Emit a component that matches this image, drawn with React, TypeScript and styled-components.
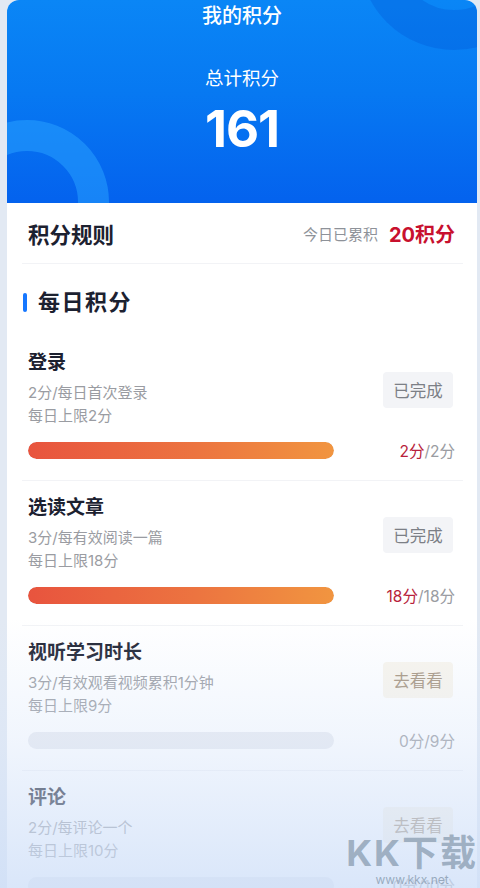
import React from "react";
import styled, { createGlobalStyle } from "styled-components";

interface Task {
  title: string;
  rule: string;
  limit: string;
  got: number;
  max: number;
  done: boolean;
}

const tasks: Task[] = [
  { title: "登录", rule: "2分/每日首次登录", limit: "每日上限2分", got: 2, max: 2, done: true },
  { title: "选读文章", rule: "3分/每有效阅读一篇", limit: "每日上限18分", got: 18, max: 18, done: true },
  { title: "视听学习时长", rule: "3分/有效观看视频累积1分钟", limit: "每日上限9分", got: 0, max: 9, done: false },
  { title: "评论", rule: "2分/每评论一个", limit: "每日上限10分", got: 0, max: 10, done: false },
];

const App = () => {
  return (
    <>
      <GlobalStyle />
      <Page>
        <Card>
          <Header>
            <TopRing />
            <BottomRing />
            <HeaderTitle>我的积分</HeaderTitle>
            <TotalLabel>总计积分</TotalLabel>
            <TotalValue>161</TotalValue>
          </Header>

          <Body>
            <RulesRow>
              <RulesTitle>积分规则</RulesTitle>
              <Today>
                <TodayLabel>今日已累积</TodayLabel>
                <TodayValue>20积分</TodayValue>
              </Today>
            </RulesRow>

            <SectionTitle>每日积分</SectionTitle>

            {tasks.map((t, i) => (
              <Item key={i}>
                <ItemTop>
                  <Info>
                    <ItemTitle>{t.title}</ItemTitle>
                    <SubLine>{t.rule}</SubLine>
                    <SubLine>{t.limit}</SubLine>
                  </Info>
                  <ActionButton $done={t.done}>{t.done ? "已完成" : "去看看"}</ActionButton>
                </ItemTop>
                <ProgressRow>
                  <Track>
                    <Fill style={{ width: `${(t.got / t.max) * 100}%` }} />
                  </Track>
                  <Score>
                    <Got $active={t.got > 0}>{t.got}分</Got>/{t.max}分
                  </Score>
                </ProgressRow>
              </Item>
            ))}
          </Body>
        </Card>
        <Fade />
        <Watermark>
          <WmBig>KK下载</WmBig>
          <WmSmall>www.kkx.net</WmSmall>
        </Watermark>
      </Page>
    </>
  );
};

export default App;

const GlobalStyle = createGlobalStyle`
  html, body {
    margin: 0;
    height: 888px;
    overflow: hidden;
    background: #e2e9f3;
    font-family: "Inter", "Noto Sans CJK SC", sans-serif;
  }
`;

const Page = styled.div`
  position: relative;
  height: 888px;
  overflow: hidden;
  padding: 0 3px 0 7px;
`;

const Card = styled.div`
  background: #fff;
  border-radius: 12px 12px 0 0;
  overflow: hidden;
  min-height: 888px;
`;

const Header = styled.div`
  position: relative;
  overflow: hidden;
  height: 203px;
  background: linear-gradient(180deg, #0a86f6 0%, #0779f2 45%, #0462ee 100%);
  display: flex;
  flex-direction: column;
  align-items: center;
  color: #fff;
`;

const TopRing = styled.div`
  position: absolute;
  left: 352px;
  top: -140px;
  width: 190px;
  height: 190px;
  border-radius: 50%;
  border: 40px solid rgba(0, 80, 210, 0.28);
  box-sizing: border-box;
`;

const BottomRing = styled.div`
  position: absolute;
  left: -62px;
  top: 120px;
  width: 164px;
  height: 164px;
  border-radius: 50%;
  border: 31px solid rgba(40, 160, 255, 0.55);
  box-sizing: border-box;
`;

const HeaderTitle = styled.div`
  position: relative;
  font-size: 20px;
  line-height: 26px;
  margin-top: 3px;
  font-weight: 500;
`;

const TotalLabel = styled.div`
  position: relative;
  font-size: 18.5px;
  line-height: 26px;
  margin-top: 36px;
`;

const TotalValue = styled.div`
  position: relative;
  font-size: 51px;
  line-height: 56px;
  margin-top: 10px;
  font-weight: 700;
  letter-spacing: -1px;
`;

const Body = styled.div`
  padding: 0 14px 0 15px;
`;

const RulesRow = styled.div`
  height: 60px;
  display: flex;
  align-items: center;
  justify-content: space-between;
  padding: 0 8px 0 6px;
  border-bottom: 1px solid #f2f3f6;
`;

const RulesTitle = styled.div`
  font-size: 21.5px;
  font-weight: 700;
  color: #1c2130;
`;

const Today = styled.div`
  display: flex;
  align-items: center;
  gap: 11px;
`;

const TodayLabel = styled.span`
  font-size: 15px;
  color: #8e9299;
`;

const TodayValue = styled.span`
  font-size: 20px;
  font-weight: 700;
  color: #c8102e;
`;

const SectionTitle = styled.div`
  position: relative;
  margin-top: 24px;
  margin-bottom: 20px;
  padding-left: 16px;
  font-size: 22px;
  line-height: 28px;
  font-weight: 700;
  color: #1c2130;
  letter-spacing: 1.5px;

  &::before {
    content: "";
    position: absolute;
    left: 1px;
    top: 5px;
    width: 4px;
    height: 19px;
    border-radius: 2px;
    background: #1677ff;
  }
`;

const Item = styled.div`
  padding: 15px 8px 19px 6px;
  border-bottom: 1px solid #f2f3f6;
`;

const ItemTop = styled.div`
  display: flex;
  align-items: center;
  justify-content: space-between;
`;

const Info = styled.div`
  display: flex;
  flex-direction: column;
`;

const ItemTitle = styled.div`
  font-size: 19px;
  line-height: 24px;
  font-weight: 700;
  color: #1c2130;
  margin-bottom: 6px;
`;

const SubLine = styled.div`
  font-size: 15px;
  line-height: 23px;
  color: #9a9ca2;
`;

const ActionButton = styled.div<{ $done: boolean }>`
  width: 70px;
  height: 36px;
  border-radius: 4px;
  display: flex;
  align-items: center;
  justify-content: center;
  font-size: 16.5px;
  background: ${(p) => (p.$done ? "#f3f4f7" : "#f9f5ec")};
  color: ${(p) => (p.$done ? "#7c7f86" : "#a3917a")};
  margin: 2px 2px 0 0;
`;

const ProgressRow = styled.div`
  display: flex;
  align-items: center;
  justify-content: space-between;
  margin-top: 12px;
`;

const Track = styled.div`
  width: 306px;
  height: 17px;
  border-radius: 9px;
  background: #e9ebf0;
  overflow: hidden;
`;

const Fill = styled.div`
  height: 100%;
  border-radius: 9px;
  background: linear-gradient(90deg, #e8543e 0%, #ec7440 55%, #f19540 100%);
`;

const Score = styled.div`
  font-size: 15.5px;
  color: #9a9ca2;
`;

const Got = styled.span<{ $active: boolean }>`
  color: ${(p) => (p.$active ? "#b81f3c" : "#9a9ca2")};
`;

const Fade = styled.div`
  position: absolute;
  left: 0;
  right: 0;
  bottom: 0;
  height: 270px;
  pointer-events: none;
  background: linear-gradient(
    180deg,
    rgba(214, 228, 250, 0) 0%,
    rgba(214, 228, 250, 0.35) 45%,
    rgba(205, 222, 248, 0.75) 100%
  );
`;

const Watermark = styled.div`
  position: absolute;
  right: 2px;
  bottom: 0;
  display: flex;
  flex-direction: column;
  align-items: center;
  pointer-events: none;
`;

const WmBig = styled.div`
  font-size: 36px;
  line-height: 38px;
  font-weight: 700;
  color: rgba(130, 150, 170, 0.7);
  letter-spacing: 2px;
`;

const WmSmall = styled.div`
  font-size: 12px;
  line-height: 16px;
  color: rgba(130, 150, 170, 0.75);
`;
